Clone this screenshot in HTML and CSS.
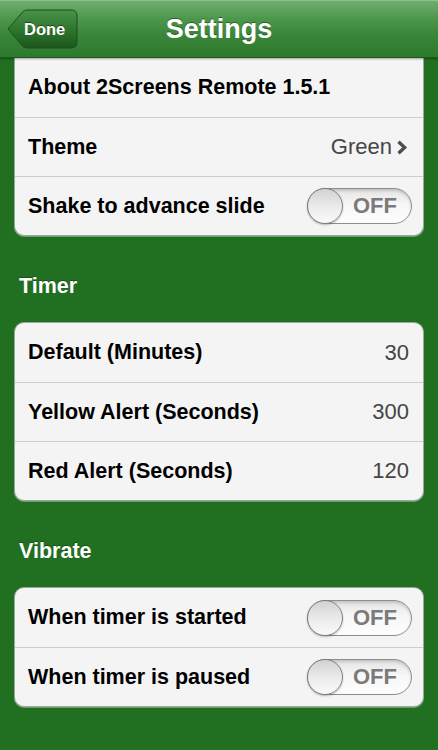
FILE: index.html
```html
<!DOCTYPE html>
<html lang="en">
<head>
    <meta charset="UTF-8">
    <meta name="viewport" content="width=device-width, initial-scale=1.0">
    <title>Settings</title>
    <link rel="stylesheet" href="styles.css">
</head>
<body>
    <div class="navbar">
        <button class="back-btn">
            <svg class="back-shape" width="71" height="40" viewBox="0 0 71 40">
                <defs>
                    <linearGradient id="btnGrad" x1="0" y1="0" x2="0" y2="1">
                        <stop offset="0" stop-color="#4a924a"/>
                        <stop offset="0.5" stop-color="#2f762f"/>
                        <stop offset="1" stop-color="#1c561c"/>
                    </linearGradient>
                </defs>
                <path d="M1 20 L16 2.5 Q17.5 1 20 1 L64 1 Q70 1 70 7 L70 33 Q70 39 64 39 L20 39 Q17.5 39 16 37.5 Z"
                      fill="url(#btnGrad)" stroke="#1d4f1d" stroke-width="1"/>
            </svg>
            <span class="back-label">Done</span>
        </button>
        <div class="nav-title">Settings</div>
        <div></div>
    </div>

    <div class="content">
        <div class="card card-top">
            <div class="row"><span class="label">About 2Screens Remote 1.5.1</span></div>
            <div class="row">
                <span class="label">Theme</span>
                <span class="value">Green
                    <svg class="chevron" width="12" height="15" viewBox="0 0 12 15">
                        <path d="M2.5 1.8 L8.6 7.5 L2.5 13.2" fill="none" stroke="#4e4e4e" stroke-width="3.4"/>
                    </svg>
                </span>
            </div>
            <div class="row">
                <span class="label">Shake to advance slide</span>
                <div class="switch"><span class="knob"></span><span class="switch-text">OFF</span></div>
            </div>
        </div>

        <div class="section-title">Timer</div>
        <div class="card">
            <div class="row"><span class="label">Default (Minutes)</span><span class="value">30</span></div>
            <div class="row"><span class="label">Yellow Alert (Seconds)</span><span class="value">300</span></div>
            <div class="row"><span class="label">Red Alert (Seconds)</span><span class="value">120</span></div>
        </div>

        <div class="section-title">Vibrate</div>
        <div class="card">
            <div class="row">
                <span class="label">When timer is started</span>
                <div class="switch"><span class="knob"></span><span class="switch-text">OFF</span></div>
            </div>
            <div class="row">
                <span class="label">When timer is paused</span>
                <div class="switch"><span class="knob"></span><span class="switch-text">OFF</span></div>
            </div>
        </div>
    </div>
</body>
</html>
```

FILE: styles.css
```css
body {
    margin: 0;
    background-color: #216f21;
    font-family: 'Liberation Sans', Arial, sans-serif;
    height: 750px;
    overflow: hidden;
}

/* Top bar */
.navbar {
    position: relative;
    z-index: 1;
    height: 58px;
    box-sizing: border-box;
    display: grid;
    grid-template-columns: 1fr auto 1fr;
    align-items: center;
    background: linear-gradient(#6fac6f 0%, #4e984e 30%, #3a863a 60%, #2c7a2c 100%);
    border-top: 1px solid #8cc08c;
    border-bottom: 1px solid #1c581c;
    box-shadow: 0 1px 2px rgba(0, 0, 0, 0.35);
}

.back-btn {
    position: relative;
    justify-self: start;
    margin-left: 7px;
    width: 71px;
    height: 40px;
    padding: 0 0 0 17px;
    border: none;
    background: none;
    text-align: left;
    font-family: inherit;
    cursor: pointer;
}

.back-shape {
    position: absolute;
    left: 0;
    top: 0;
}

.back-label {
    position: relative;
    color: #fff;
    font-size: 16.5px;
    font-weight: bold;
    text-shadow: 0 -1px 0 rgba(0, 0, 0, 0.45);
}

.nav-title {
    color: #fff;
    font-size: 27px;
    font-weight: bold;
    text-shadow: 0 -1px 0 rgba(0, 0, 0, 0.4);
}

/* Grouped list */
.content {
    padding: 0 14px;
}

.card {
    background-color: #f4f4f4;
    border: 1px solid #9aa89a;
    border-radius: 10px;
    box-shadow: 0 1px 0 rgba(255, 255, 255, 0.35);
    overflow: hidden;
}

.card-top {
    border-top: none;
    border-radius: 0 0 10px 10px;
}

.row {
    height: 59px;
    box-sizing: border-box;
    display: flex;
    align-items: center;
    justify-content: space-between;
    padding: 0 14px 0 13px;
}

.row + .row {
    border-top: 1px solid #cdcdcd;
}

.label {
    color: #000;
    font-size: 21.5px;
    font-weight: bold;
}

.value {
    display: flex;
    align-items: center;
    gap: 4px;
    color: #454545;
    font-size: 22px;
}

.chevron {
    margin-top: 1px;
    margin-right: 1px;
}

.section-title {
    padding: 38px 5px 24px;
    line-height: 24px;
    color: #fff;
    font-size: 21.5px;
    font-weight: bold;
    text-shadow: 0 -1px 0 rgba(0, 0, 0, 0.3);
}

/* Off switch */
.switch {
    width: 105px;
    height: 36px;
    margin-right: -3px;
    box-sizing: border-box;
    display: flex;
    align-items: center;
    border: 1px solid #8d8d8d;
    border-radius: 18px;
    background: linear-gradient(#e4e4e4, #f7f7f7 45%, #fdfdfd);
    box-shadow: inset 0 2px 3px rgba(0, 0, 0, 0.15);
}

.knob {
    width: 36px;
    height: 36px;
    margin-left: -1px;
    box-sizing: border-box;
    border: 1px solid #7f7f7f;
    border-radius: 50%;
    background: linear-gradient(#d2d2d2, #ececec 55%, #fafafa);
    box-shadow: 0 1px 2px rgba(0, 0, 0, 0.25);
}

.switch-text {
    flex: 1;
    text-align: center;
    color: #7a7a7a;
    font-size: 22px;
    font-weight: bold;
    padding-right: 4px;
}
```
